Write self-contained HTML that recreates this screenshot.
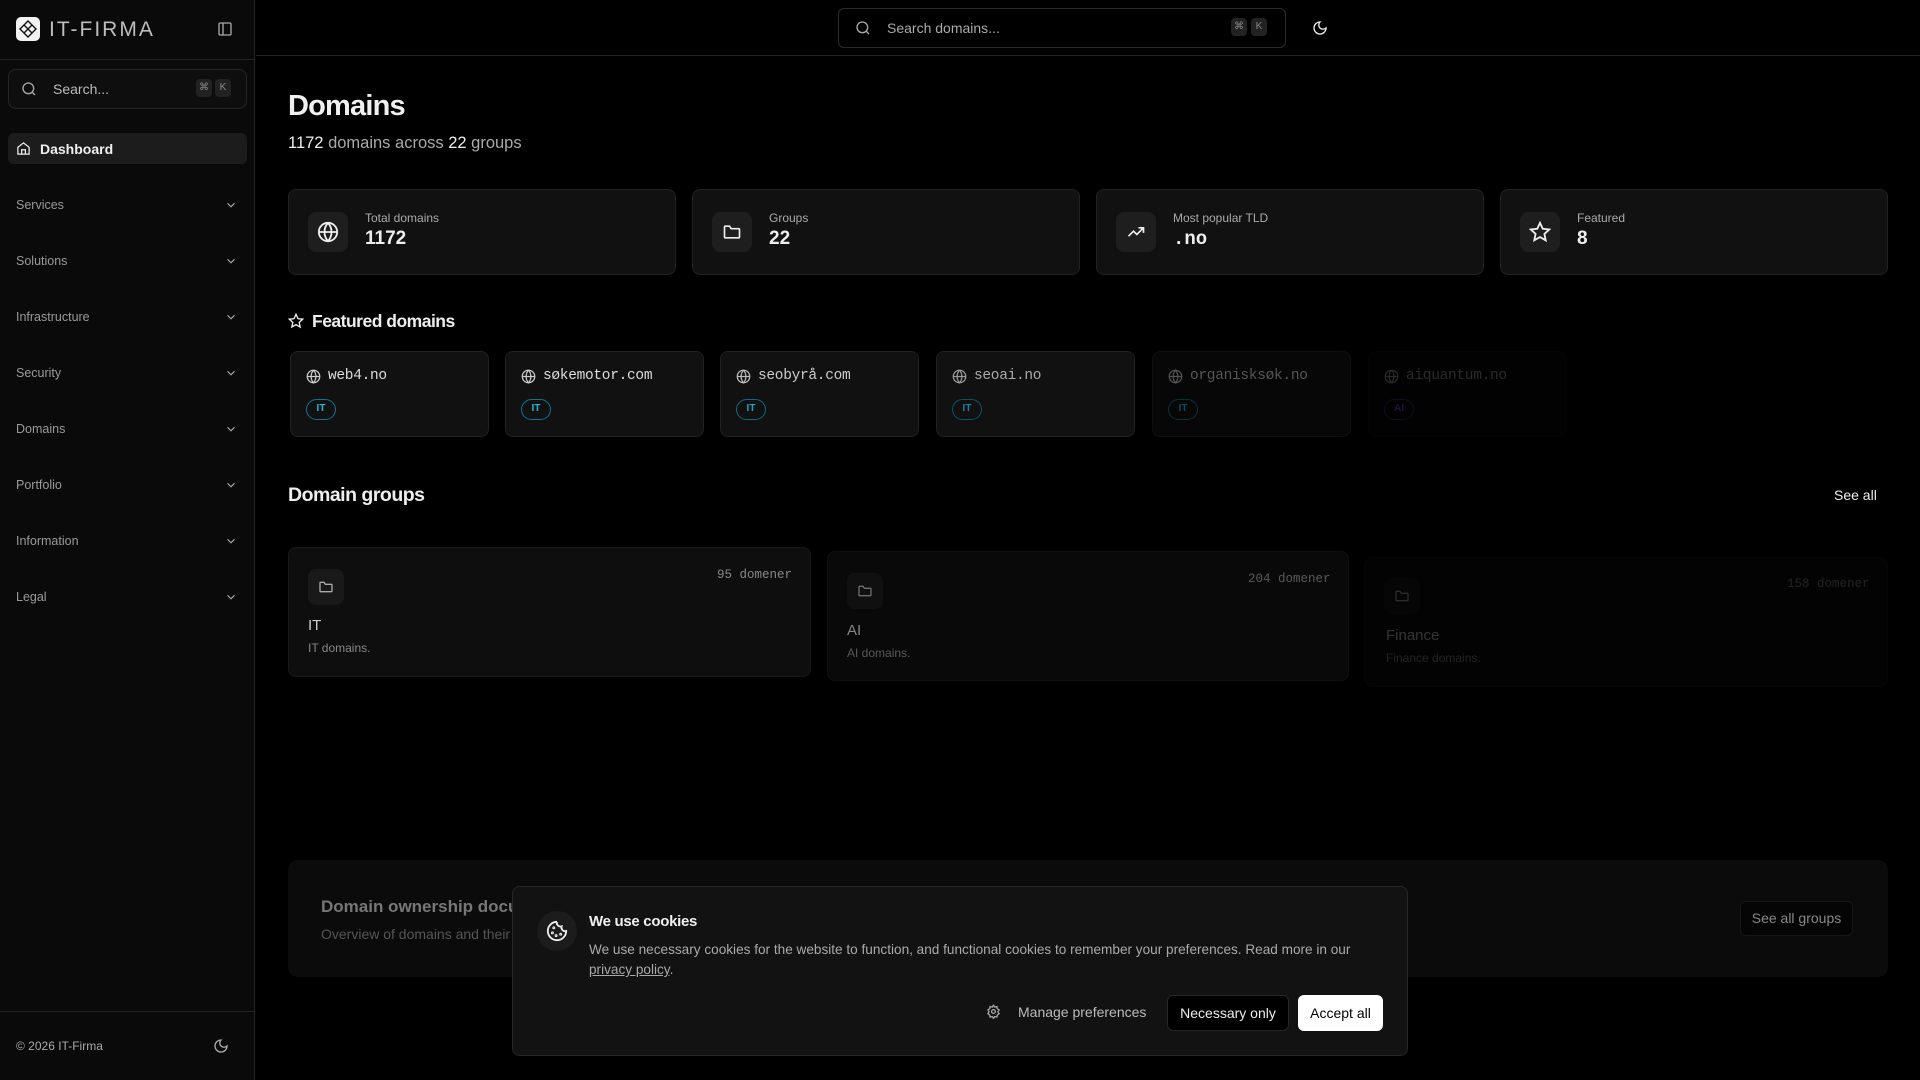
<!DOCTYPE html>
<html><head><meta charset="utf-8"><style>
*{box-sizing:border-box;margin:0;padding:0}
body{width:1920px;height:1080px;background:#000;font-family:"Liberation Sans",sans-serif;color:#eee;position:relative;overflow:hidden}
.a{position:absolute}
.mono{font-family:"Liberation Mono",monospace}
.card{position:absolute;background:#111;border:1px solid #222;border-radius:8px}
.ib{position:absolute;background:#1e1e1e;border-radius:8px;display:flex;align-items:center;justify-content:center}
svg{display:block}
.nav{position:absolute;left:16px;width:222px;font-size:12.5px;color:#9a9a9a}
.nav svg{position:absolute;right:0;top:0}
.kbd{position:absolute;width:16px;height:18px;background:#222;border-radius:4px;font-size:10px;color:#888;text-align:center;line-height:18px}
</style></head><body>
<div class="a" style="left:0;top:0;width:255px;height:1080px;background:#0a0a0a;border-right:1px solid #222"></div>
<div class="a" style="left:0;top:59px;width:255px;height:1px;background:#222"></div>
<div class="a" style="left:16px;top:17px;width:24px;height:24px;background:#f2f2f2;border-radius:5px">
<svg width="24" height="24" viewBox="0 0 24 24" fill="none" stroke="#111" stroke-width="1.4"><path d="M12 4l4 4-4 4-4-4z M8 8l4 4-4 4-4-4z M16 8l4 4-4 4-4-4z M12 12l4 4-4 4-4-4z"/></svg></div>
<div class="a" style="left:49px;top:18px;font-size:21px;color:#bdbdbd;letter-spacing:2px">IT-FIRMA</div>
<svg class="a" style="left:217px;top:21px" width="16" height="16" viewBox="0 0 24 24" fill="none" stroke="#aaa" stroke-width="2"><rect x="3" y="3" width="18" height="18" rx="2"/><path d="M9 3v18"/></svg>
<div class="a" style="left:8px;top:69px;width:239px;height:40px;border:1px solid #262626;border-radius:8px;background:#0e0e0e"></div>
<svg class="a" style="left:21px;top:81px" width="16" height="16" viewBox="0 0 24 24" fill="none" stroke="#aaa" stroke-width="2"><circle cx="11" cy="11" r="8"/><path d="M21 21l-4.3-4.3"/></svg>
<div class="a" style="left:53px;top:81px;font-size:14px;color:#bbb">Search...</div>
<div class="kbd" style="left:196px;top:79px">⌘</div><div class="kbd" style="left:215px;top:79px">K</div>
<div class="a" style="left:8px;top:133px;width:239px;height:31px;background:#1c1c1c;border-radius:6px"></div>
<svg class="a" style="left:16px;top:141px" width="15" height="15" viewBox="0 0 24 24" fill="none" stroke="#eee" stroke-width="2"><path d="M3 10l9-7 9 7v11H3z M9 21v-7h6v7"/></svg>
<div class="a" style="left:40px;top:141px;font-size:14px;color:#f0f0f0;font-weight:bold">Dashboard</div>
<div class="nav" style="top:198px">Services<svg width="14" height="14" viewBox="0 0 24 24" fill="none" stroke="#aaa" stroke-width="2"><path d="M6 9l6 6 6-6"/></svg></div>
<div class="nav" style="top:254px">Solutions<svg width="14" height="14" viewBox="0 0 24 24" fill="none" stroke="#aaa" stroke-width="2"><path d="M6 9l6 6 6-6"/></svg></div>
<div class="nav" style="top:310px">Infrastructure<svg width="14" height="14" viewBox="0 0 24 24" fill="none" stroke="#aaa" stroke-width="2"><path d="M6 9l6 6 6-6"/></svg></div>
<div class="nav" style="top:366px">Security<svg width="14" height="14" viewBox="0 0 24 24" fill="none" stroke="#aaa" stroke-width="2"><path d="M6 9l6 6 6-6"/></svg></div>
<div class="nav" style="top:422px">Domains<svg width="14" height="14" viewBox="0 0 24 24" fill="none" stroke="#aaa" stroke-width="2"><path d="M6 9l6 6 6-6"/></svg></div>
<div class="nav" style="top:478px">Portfolio<svg width="14" height="14" viewBox="0 0 24 24" fill="none" stroke="#aaa" stroke-width="2"><path d="M6 9l6 6 6-6"/></svg></div>
<div class="nav" style="top:534px">Information<svg width="14" height="14" viewBox="0 0 24 24" fill="none" stroke="#aaa" stroke-width="2"><path d="M6 9l6 6 6-6"/></svg></div>
<div class="nav" style="top:590px">Legal<svg width="14" height="14" viewBox="0 0 24 24" fill="none" stroke="#aaa" stroke-width="2"><path d="M6 9l6 6 6-6"/></svg></div>
<div class="a" style="left:0;top:1011px;width:255px;height:1px;background:#222"></div>
<div class="a" style="left:16px;top:1039px;font-size:12px;color:#aaa">© 2026 IT-Firma</div>
<svg class="a" style="left:213px;top:1038px" width="16" height="16" viewBox="0 0 24 24" fill="none" stroke="#aaa" stroke-width="2"><path d="M12 3a6 6 0 0 0 9 9 9 9 0 1 1-9-9z"/></svg>
<div class="a" style="left:256px;top:55px;width:1664px;height:1px;background:#222"></div>
<div class="a" style="left:838px;top:8px;width:448px;height:40px;border:1px solid #2a2a2a;border-radius:6px"></div>
<svg class="a" style="left:855px;top:20px" width="16" height="16" viewBox="0 0 24 24" fill="none" stroke="#aaa" stroke-width="2"><circle cx="11" cy="11" r="8"/><path d="M21 21l-4.3-4.3"/></svg>
<div class="a" style="left:887px;top:20px;font-size:14px;color:#aaa">Search domains...</div>
<div class="kbd" style="left:1231px;top:18px">⌘</div><div class="kbd" style="left:1251px;top:18px">K</div>
<svg class="a" style="left:1312px;top:20px" width="16" height="16" viewBox="0 0 24 24" fill="none" stroke="#eee" stroke-width="2"><path d="M12 3a6 6 0 0 0 9 9 9 9 0 1 1-9-9z"/></svg>
<div class="a" style="left:288px;top:90px;font-size:29px;font-weight:bold;color:#f0f0f0;letter-spacing:-0.8px">Domains</div>
<div class="a" style="left:288px;top:134px;font-size:16.5px;color:#aaa"><span style="color:#eee">1172</span> domains across <span style="color:#eee">22</span> groups</div>
<div class="card" style="left:288px;top:189px;width:388px;height:86px"></div>
<div class="card" style="left:692px;top:189px;width:388px;height:86px"></div>
<div class="card" style="left:1096px;top:189px;width:388px;height:86px"></div>
<div class="card" style="left:1500px;top:189px;width:388px;height:86px"></div>
<div class="ib" style="left:308px;top:212px;width:40px;height:40px"><svg width="22" height="22" viewBox="0 0 24 24" fill="none" stroke="#eee" stroke-width="2"><circle cx="12" cy="12" r="10"/><path d="M2 12h20M12 2a15 15 0 0 1 0 20a15 15 0 0 1 0-20"/></svg></div>
<div class="ib" style="left:712px;top:212px;width:40px;height:40px"><svg width="20" height="20" viewBox="0 0 24 24" fill="none" stroke="#eee" stroke-width="2"><path d="M3 6a1 1 0 0 1 1-1h5l2 3h9a1 1 0 0 1 1 1v9a1 1 0 0 1-1 1H4a1 1 0 0 1-1-1z"/></svg></div>
<div class="ib" style="left:1116px;top:212px;width:40px;height:40px"><svg width="20" height="20" viewBox="0 0 24 24" fill="none" stroke="#eee" stroke-width="2"><path d="M3 17l6-6 4 4 8-8M15 7h6v6"/></svg></div>
<div class="ib" style="left:1520px;top:212px;width:40px;height:40px"><svg width="22" height="22" viewBox="0 0 24 24" fill="none" stroke="#eee" stroke-width="2"><path d="M12 2l3 6.5 7 .8-5.2 4.8 1.4 7L12 17.5 5.8 21l1.4-7L2 9.3l7-.8z"/></svg></div>
<div class="a" style="left:365px;top:211px;font-size:12px;color:#aaa">Total domains</div><div class="a" style="left:365px;top:228px;font-size:19px;font-weight:bold">1172</div>
<div class="a" style="left:769px;top:211px;font-size:12px;color:#aaa">Groups</div><div class="a" style="left:769px;top:228px;font-size:19px;font-weight:bold">22</div>
<div class="a" style="left:1173px;top:211px;font-size:12px;color:#aaa">Most popular TLD</div><div class="a mono" style="left:1173px;top:228px;font-size:19px;font-weight:bold">.no</div>
<div class="a" style="left:1577px;top:211px;font-size:12px;color:#aaa">Featured</div><div class="a" style="left:1577px;top:228px;font-size:19px;font-weight:bold">8</div>
<svg class="a" style="left:288px;top:313px" width="16" height="16" viewBox="0 0 24 24" fill="none" stroke="#eee" stroke-width="2"><path d="M12 2l3 6.5 7 .8-5.2 4.8 1.4 7L12 17.5 5.8 21l1.4-7L2 9.3l7-.8z"/></svg>
<div class="a" style="left:312px;top:311px;font-size:17.5px;font-weight:bold;letter-spacing:-0.5px">Featured domains</div>
<div class="a" style="left:288px;top:484px;font-size:19.5px;font-weight:bold;letter-spacing:-0.5px">Domain groups</div>
<div class="a" style="left:1834px;top:487px;font-size:14px;color:#eee">See all</div>
<div class="card" style="left:288px;top:547px;width:523px;height:130px;background:#0e0e0e;border-color:#181818"></div>
<div class="ib" style="left:308px;top:569px;width:36px;height:36px;background:#191919"><svg width="16" height="16" viewBox="0 0 24 24" fill="none" stroke="#aaa" stroke-width="2"><path d="M3 6a1 1 0 0 1 1-1h5l2 3h9a1 1 0 0 1 1 1v9a1 1 0 0 1-1 1H4a1 1 0 0 1-1-1z"/></svg></div>
<div class="a mono" style="left:717px;top:568px;font-size:12.5px;color:#888">95 domener</div>
<div class="a" style="left:308px;top:617px;font-size:15px;color:#ccc">IT</div>
<div class="a" style="left:308px;top:641px;font-size:12px;color:#888">IT domains.</div>
<div style="opacity:.65">
<div class="card" style="left:827px;top:551px;width:522px;height:130px;background:#0e0e0e;border-color:#181818"></div>
<div class="ib" style="left:847px;top:573px;width:36px;height:36px;background:#191919"><svg width="16" height="16" viewBox="0 0 24 24" fill="none" stroke="#aaa" stroke-width="2"><path d="M3 6a1 1 0 0 1 1-1h5l2 3h9a1 1 0 0 1 1 1v9a1 1 0 0 1-1 1H4a1 1 0 0 1-1-1z"/></svg></div>
<div class="a mono" style="left:1248px;top:572px;font-size:12.5px;color:#888">204 domener</div>
<div class="a" style="left:847px;top:622px;font-size:15px;color:#ccc">AI</div>
<div class="a" style="left:847px;top:646px;font-size:12px;color:#888">AI domains.</div>
</div>
<div style="opacity:.25">
<div class="card" style="left:1364px;top:557px;width:524px;height:130px;background:#0e0e0e;border-color:#181818"></div>
<div class="ib" style="left:1384px;top:578px;width:36px;height:36px;background:#191919"><svg width="16" height="16" viewBox="0 0 24 24" fill="none" stroke="#aaa" stroke-width="2"><path d="M3 6a1 1 0 0 1 1-1h5l2 3h9a1 1 0 0 1 1 1v9a1 1 0 0 1-1 1H4a1 1 0 0 1-1-1z"/></svg></div>
<div class="a mono" style="left:1787px;top:577px;font-size:12.5px;color:#888">158 domener</div>
<div class="a" style="left:1386px;top:627px;font-size:15px;color:#ccc">Finance</div>
<div class="a" style="left:1386px;top:651px;font-size:12px;color:#888">Finance domains.</div>
</div>
<div class="a" style="left:288px;top:860px;width:1600px;height:117px;background:#0b0b0b;border-radius:10px"></div>
<div class="a" style="left:321px;top:897px;font-size:17px;font-weight:bold;color:#777">Domain ownership documentation</div>
<div class="a" style="left:321px;top:926px;font-size:14px;color:#555">Overview of domains and their groups</div>
<div class="a" style="left:1740px;top:901px;width:113px;height:35px;background:#050505;border:1px solid #161616;border-radius:6px;font-size:14px;color:#888;text-align:center;line-height:33px">See all groups</div>
<div class="a" style="left:512px;top:886px;width:896px;height:170px;background:#121212;border:1px solid #262626;border-radius:8px"></div>
<div class="a" style="left:537px;top:911px;width:40px;height:40px;border-radius:50%;background:#1c1c1c"></div>
<svg class="a" style="left:546px;top:920px" width="22" height="22" viewBox="0 0 24 24" fill="none" stroke="#eee" stroke-width="2"><path d="M12 2a10 10 0 1 0 10 10 4 4 0 0 1-5-5 4 4 0 0 1-5-5"/><circle cx="8.5" cy="8.5" r=".6"/><circle cx="16" cy="15.5" r=".6"/><circle cx="11" cy="17" r=".6"/><circle cx="7" cy="14" r=".6"/></svg>
<div class="a" style="left:589px;top:913px;font-size:15px;font-weight:bold;color:#f0f0f0;letter-spacing:-0.3px">We use cookies</div>
<div class="a" style="left:589px;top:940px;width:800px;font-size:13.6px;line-height:20px;color:#aaa">We use necessary cookies for the website to function, and functional cookies to remember your preferences. Read more in our <u>privacy policy</u>.</div>
<svg class="a" style="left:986px;top:1004px" width="15" height="15" viewBox="0 0 24 24" fill="none" stroke="#aaa" stroke-width="2"><circle cx="12" cy="12" r="3"/><path d="M12 2l2 3 3.5-1 .5 3.5 3 2-2 3 2 3-3 2-.5 3.5-3.5-1-2 3-2-3-3.5 1-.5-3.5-3-2 2-3-2-3 3-2 .5-3.5 3.5 1z"/></svg>
<div class="a" style="left:1018px;top:1004px;font-size:14px;color:#bbb">Manage preferences</div>
<div class="a" style="left:1167px;top:995px;width:122px;height:36px;background:#000;border:1px solid #262626;border-radius:6px;font-size:14px;color:#eee;text-align:center;line-height:34px">Necessary only</div>
<div class="a" style="left:1298px;top:995px;width:85px;height:36px;background:#fff;border-radius:6px;font-size:14px;color:#000;text-align:center;line-height:36px">Accept all</div>
<div class="card" style="left:290px;top:351px;width:199px;height:86px"></div>
<div class="card" style="left:505px;top:351px;width:199px;height:86px"></div>
<div class="card" style="left:720px;top:351px;width:199px;height:86px"></div>
<div class="card" style="left:936px;top:351px;width:199px;height:86px"></div>
<div class="card" style="left:1152px;top:351px;width:199px;height:86px;opacity:.45"></div>
<div class="card" style="left:1368px;top:351px;width:199px;height:86px;opacity:.12"></div>
<div class="a mono" style="left:306px;top:368px;font-size:14.5px;color:#ddd;display:flex;gap:7px;align-items:center;letter-spacing:-0.3px"><svg width="15" height="15" viewBox="0 0 24 24" fill="none" stroke="#ccc" stroke-width="2"><circle cx="12" cy="12" r="10"/><path d="M2 12h20M12 2a15 15 0 0 1 0 20a15 15 0 0 1 0-20"/></svg>web4.no</div>
<div class="a mono" style="left:521px;top:368px;font-size:14.5px;color:#ddd;display:flex;gap:7px;align-items:center;letter-spacing:-0.3px"><svg width="15" height="15" viewBox="0 0 24 24" fill="none" stroke="#ccc" stroke-width="2"><circle cx="12" cy="12" r="10"/><path d="M2 12h20M12 2a15 15 0 0 1 0 20a15 15 0 0 1 0-20"/></svg>søkemotor.com</div>
<div class="a mono" style="left:736px;top:368px;font-size:14.5px;color:#ccc;display:flex;gap:7px;align-items:center;letter-spacing:-0.3px"><svg width="15" height="15" viewBox="0 0 24 24" fill="none" stroke="#bbb" stroke-width="2"><circle cx="12" cy="12" r="10"/><path d="M2 12h20M12 2a15 15 0 0 1 0 20a15 15 0 0 1 0-20"/></svg>seobyrå.com</div>
<div class="a mono" style="left:952px;top:368px;font-size:14.5px;color:#aaa;display:flex;gap:7px;align-items:center;letter-spacing:-0.3px"><svg width="15" height="15" viewBox="0 0 24 24" fill="none" stroke="#999" stroke-width="2"><circle cx="12" cy="12" r="10"/><path d="M2 12h20M12 2a15 15 0 0 1 0 20a15 15 0 0 1 0-20"/></svg>seoai.no</div>
<div class="a mono" style="left:1168px;top:368px;font-size:14.5px;color:#555;display:flex;gap:7px;align-items:center;letter-spacing:-0.3px"><svg width="15" height="15" viewBox="0 0 24 24" fill="none" stroke="#555" stroke-width="2"><circle cx="12" cy="12" r="10"/><path d="M2 12h20M12 2a15 15 0 0 1 0 20a15 15 0 0 1 0-20"/></svg>organisksøk.no</div>
<div class="a mono" style="left:1384px;top:368px;font-size:14.5px;color:#2a2a2a;display:flex;gap:7px;align-items:center;letter-spacing:-0.3px"><svg width="15" height="15" viewBox="0 0 24 24" fill="none" stroke="#2a2a2a" stroke-width="2"><circle cx="12" cy="12" r="10"/><path d="M2 12h20M12 2a15 15 0 0 1 0 20a15 15 0 0 1 0-20"/></svg>aiquantum.no</div>
<div class="a" style="left:306px;top:399px;width:30px;height:21px;border:1.5px solid #0e7490;border-radius:11px;font-size:10px;font-weight:bold;color:#22b8d8;text-align:center;line-height:18px">IT</div>
<div class="a" style="left:521px;top:399px;width:30px;height:21px;border:1.5px solid #0e7490;border-radius:11px;font-size:10px;font-weight:bold;color:#22b8d8;text-align:center;line-height:18px">IT</div>
<div class="a" style="left:736px;top:399px;width:30px;height:21px;border:1.5px solid #0e6a84;border-radius:11px;font-size:10px;font-weight:bold;color:#1ea5c4;text-align:center;line-height:18px">IT</div>
<div class="a" style="left:952px;top:399px;width:30px;height:21px;border:1.5px solid #0b5264;border-radius:11px;font-size:10px;font-weight:bold;color:#18809a;text-align:center;line-height:18px">IT</div>
<div class="a" style="left:1168px;top:399px;width:30px;height:21px;border:1.5px solid #07313b;border-radius:11px;font-size:10px;font-weight:bold;color:#0e4b5a;text-align:center;line-height:18px">IT</div>
<div class="a" style="left:1384px;top:399px;width:30px;height:21px;border:1.5px solid #150a25;border-radius:11px;font-size:10px;font-weight:bold;color:#1f1236;text-align:center;line-height:18px">AI</div>
</body></html>
